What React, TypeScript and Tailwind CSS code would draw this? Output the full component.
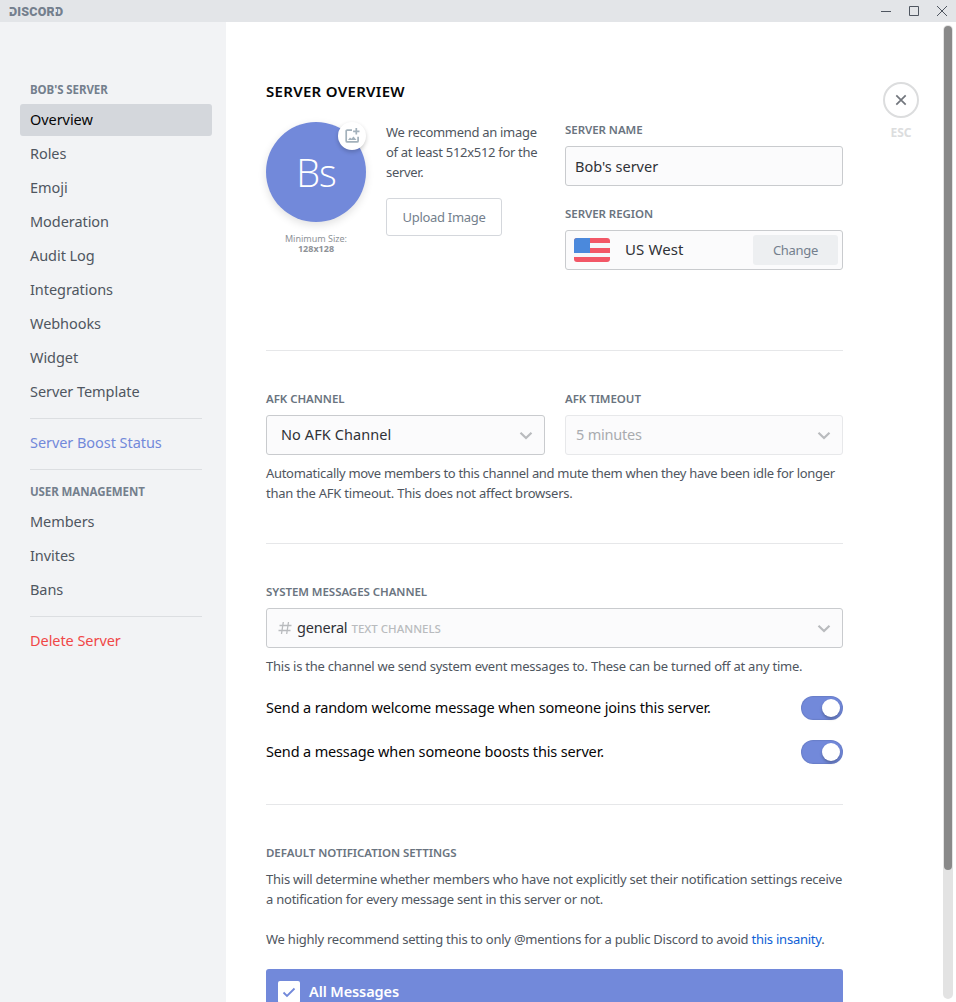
import React from "react";

type Tone = "default" | "active" | "brand" | "danger";

const TONES: Record<Tone, string> = {
  default: "text-[#4f5660]",
  active: "bg-[#d4d7dc] text-[#060607]",
  brand: "text-[#7289da]",
  danger: "text-[#f04747]",
};

function NavItem({ label, tone = "default" }: { label: string; tone?: Tone }) {
  return (
    <div className={`mb-0.5 h-8 shrink-0 rounded-[3px] px-2.5 text-[14.5px] leading-[30px] tracking-[-0.06px] ${TONES[tone]}`}>
      {label}
    </div>
  );
}

function NavHeader({ children }: { children: React.ReactNode }) {
  return (
    <div className="mb-1.5 px-2.5 text-[11.5px] leading-4 font-bold tracking-[-0.08px] text-[#747f8d] uppercase">{children}</div>
  );
}

function NavDivider() {
  return (
    <div className="px-2.5 py-2">
      <div className="h-px bg-[#dcdee1]" />
    </div>
  );
}

function Label({ children }: { children: React.ReactNode }) {
  return (
    <div className="mb-2 text-[11.5px] leading-4 font-semibold tracking-[-0.05px] text-[#6a7480] uppercase">{children}</div>
  );
}

function Chevron() {
  return (
    <svg width="14" height="14" viewBox="0 0 14 14" fill="none" stroke="#b9bbbe" strokeWidth="2.2">
      <path d="M1.5 4.7 7 10l5.5-5.300" />
    </svg>
  );
}

function Description({ children }: { children: React.ReactNode }) {
  return <p className="text-[13px] leading-5 tracking-[-0.235px] whitespace-nowrap text-[#4f5660]">{children}</p>;
}

function Toggle({ label }: { label: string }) {
  return (
    <div className="flex h-6 items-center justify-between">
      <span className="text-[14.5px] tracking-[-0.15px] text-[#060607]">{label}</span>
      <span className="flex h-6 w-[42px] justify-end rounded-full bg-[#7289da] p-[3px] shadow-[inset_0_0_1px_1px_rgba(0,0,0,0.08)]">
        <span className="h-[18px] w-[18px] rounded-full bg-white shadow-[0_2px_3px_rgba(0,0,0,0.25)]" />
      </span>
    </div>
  );
}

function Flag() {
  return (
    <svg width="36" height="24" viewBox="0 0 36 24">
      <defs>
        <clipPath id="flag">
          <rect width="36" height="24" rx="3" />
        </clipPath>
      </defs>
      <g clipPath="url(#flag)">
        <rect width="36" height="24" fill="#f5f7fa" />
        <path fill="#f25767" d="M0 0h36v5H0zM0 10h36v5H0zM0 19h36v5H0z" />
        <rect width="16" height="15" fill="#4b89dc" />
      </g>
    </svg>
  );
}

export default function App() {
  return (
    <div className="flex h-[1002px] w-[956px] flex-col overflow-hidden bg-white font-['Noto_Sans',sans-serif]">
      <header className="flex h-[22px] shrink-0 items-center justify-between bg-[#e3e5e8] pl-[9px]">
        <span className="relative pt-0.5 font-['Roboto',sans-serif] text-[12.5px] leading-[22px] font-black tracking-[0.22px] text-[#747f8d]">
          DISCORD
          <span className="absolute top-[10px] left-0 h-[3px] w-[3px] bg-[#e3e5e8]" />
          <span className="absolute top-[10px] right-[6px] h-[3px] w-[3px] bg-[#e3e5e8]" />
        </span>
        <div className="flex">
          <span className="flex h-[22px] w-7 items-center justify-center">
            <svg width="12" height="12" viewBox="0 0 12 12" stroke="#4f5660"><path d="M1 6.5h10" /></svg>
          </span>
          <span className="flex h-[22px] w-7 items-center justify-center">
            <svg width="12" height="12" viewBox="0 0 12 12" stroke="#4f5660" fill="none"><path d="M1.5 1.5h9v9h-9z" /></svg>
          </span>
          <span className="flex h-[22px] w-7 items-center justify-center">
            <svg width="12" height="12" viewBox="0 0 12 12" stroke="#4f5660"><path d="m1 1 10 10M11 1 1 11" /></svg>
          </span>
        </div>
      </header>

      <div className="flex min-h-0 flex-1">
        <nav className="flex w-[226px] shrink-0 flex-col bg-[#f2f3f5] pt-[60px] pr-3.5 pl-5">
          <NavHeader>Bob's server</NavHeader>
          <NavItem label="Overview" tone="active" />
          <NavItem label="Roles" />
          <NavItem label="Emoji" />
          <NavItem label="Moderation" />
          <NavItem label="Audit Log" />
          <NavItem label="Integrations" />
          <NavItem label="Webhooks" />
          <NavItem label="Widget" />
          <NavItem label="Server Template" />
          <NavDivider />
          <NavItem label="Server Boost Status" tone="brand" />
          <NavDivider />
          <div className="pt-1.5">
            <NavHeader>User management</NavHeader>
          </div>
          <NavItem label="Members" />
          <NavItem label="Invites" />
          <NavItem label="Bans" />
          <NavDivider />
          <NavItem label="Delete Server" tone="danger" />
        </nav>

        <main className="ml-10 w-[577px] shrink-0 pt-[59px]">
          <h2 className="text-[15px] leading-5 font-semibold tracking-[0.3px] text-[#060607]">SERVER OVERVIEW</h2>

          <section className="mt-[21px] flex h-[229px] border-b border-[#e6e7e9]">
            <div className="w-[100px] shrink-0">
              <div className="relative flex h-[100px] items-center justify-center rounded-full bg-[#7289da] font-['Open_Sans',sans-serif] text-[38px] font-light tracking-[-1px] text-white shadow-[0_3px_8px_rgba(0,0,0,0.12)]">
                Bs
                <span className="absolute top-0 right-0 flex h-7 w-7 items-center justify-center rounded-full bg-white shadow-[0_2px_4px_rgba(0,0,0,0.2)]">
                  <svg width="16" height="16" viewBox="0 0 16 16" fill="none" stroke="#a3b1bb" strokeWidth="1.700">
                    <path d="M8 2.100H3.200a1 1 0 0 0-1 1v9.800a1 1 0 0 0 1 1h9.900a1 1 0 0 0 1-1V8.700M12.300.1v6.400M9.100 3.300h6.400" />
                    <path d="m4 12 2-2.600 1.400 1.400 2.100-2.300 3 3.500z" fill="#a3b1bb" stroke="none" />
                  </svg>
                </span>
              </div>
              <div className="mt-3 text-center text-[9px] leading-[10px] text-[#8e9297]">
                <div>Minimum Size:</div>
                <div className="font-bold">128x128</div>
              </div>
            </div>
            <div className="ml-5 w-[170px] shrink-0">
              <p className="text-[13px] leading-5 tracking-[-0.3px] text-[#4f5660]">
                We recommend an image
                <br />
                of at least 512x512 for the
                <br />
                server.
              </p>
              <button className="mt-4 flex h-[38px] w-[116px] items-center justify-center rounded-[3px] border border-[#d4d7dc] pt-px text-[13px] tracking-[-0.3px] text-[#747f8d]">
                Upload Image
              </button>
            </div>
            <div className="ml-auto w-[278px]">
              <Label>Server name</Label>
              <div className="flex h-10 items-center rounded-[3px] border border-[#c9cbce] bg-[#fbfbfc] px-[9px] pt-px text-[14.5px] text-[#303237]">
                Bob's server
              </div>
              <div className="mt-5">
                <Label>Server region</Label>
              </div>
              <div className="flex h-10 items-center rounded-[3px] border border-[#c9cbce] bg-[#fbfbfc] pr-1 pl-2">
                <Flag />
                <span className="ml-[15px] pb-0.5 text-[15px] tracking-[0.1px] text-[#303237]">US West</span>
                <button className="ml-auto h-[30px] w-[85px] rounded-[3px] bg-[#edeff1] pt-px text-[13px] tracking-[-0.3px] text-[#747f8d]">
                  Change
                </button>
              </div>
            </div>
          </section>

          <section className="mt-10 h-[153px] border-b border-[#e6e7e9]">
            <div className="flex justify-between">
              <div className="w-[279px]">
                <Label>AFK channel</Label>
                <div className="flex h-10 items-center justify-between rounded-[3px] border border-[#c9cbce] bg-[#fbfbfc] pr-[11px] pl-3.5">
                  <span className="text-[14.500px] tracking-[0.080px] text-[#303237]">No AFK Channel</span>
                  <Chevron />
                </div>
              </div>
              <div className="w-[278px]">
                <Label>AFK timeout</Label>
                <div className="flex h-10 items-center justify-between rounded-[3px] border border-[#e7e8ea] bg-[#fbfbfc] pr-[11px] pl-2.5">
                  <span className="text-[14.500px] tracking-[-0.200px] text-[#a9abaf]">5 minutes</span>
                  <Chevron />
                </div>
              </div>
            </div>
            <div className="mt-2">
              <Description>
                <span className="tracking-[-0.305px]">
                  Automatically move members to this channel and mute them when they have been idle for longer
                </span>
                <br />
                than the AFK timeout. This does not affect browsers.
              </Description>
            </div>
          </section>

          <section className="mt-10 h-[221px] border-b border-[#e6e7e9]">
            <Label>System messages channel</Label>
            <div className="mb-2 flex h-10 items-center rounded-[3px] border border-[#c9cbce] bg-[#fbfbfc] px-[11px]">
              <svg width="14" height="14" viewBox="0 0 14 14" fill="none" stroke="#b9bbbe" strokeWidth="1.300">
                <path d="M5.300 1 3.500 13M10.500 1 8.700 13M1.500 4.500h12M.500 9.500h12" />
              </svg>
              <span className="ml-[5px] text-[14.500px] tracking-[-0.200px] text-[#303237]">general</span>
              <span className="ml-1 pt-px text-[11.500px] font-medium text-[#b9bbbe]">TEXT CHANNELS</span>
              <span className="ml-auto">
                <Chevron />
              </span>
            </div>
            <Description>This is the channel we send system event messages to. These can be turned off at any time.</Description>
            <div className="mt-5 flex flex-col gap-5">
              <Toggle label="Send a random welcome message when someone joins this server." />
              <Toggle label="Send a message when someone boosts this server." />
            </div>
          </section>

          <section className="mt-10">
            <Label>Default notification settings</Label>
            <Description>
              This will determine whether members who have not explicitly set their notification settings receive
              <br />
              a notification for every message sent in this server or not.
              <br />
              <br />
              We highly recommend setting this to only @mentions for a public Discord to avoid{" "}
              <a className="text-[#0f5fd6]">this insanity</a>.
            </Description>
            <div className="mt-5 flex h-[46px] items-center rounded-[3px] bg-[#7289da] pl-3">
              <span className="flex h-[22px] w-[22px] items-center justify-center rounded-[2px] bg-white">
                <svg width="14" height="14" viewBox="0 0 14 14" fill="none" stroke="#7289da" strokeWidth="1.800">
                  <path d="m1.500 7.500 3.500 3.500 7.500-7.500" />
                </svg>
              </span>
              <span className="ml-[9px] text-[14.500px] font-semibold tracking-[-0.100px] text-white">All Messages</span>
            </div>
          </section>
        </main>

        <aside className="ml-10 w-9 shrink-0 pt-[60px]">
          <button className="flex h-9 w-9 items-center justify-center rounded-full border-2 border-[#dcddde]">
            <svg width="12" height="12" viewBox="0 0 12 12" stroke="#72767d" strokeWidth="1.700">
              <path d="m1.300 1.300 9.400 9.400M10.700 1.300 1.300 10.700" />
            </svg>
          </button>
          <div className="mt-[7px] text-center text-[12px] leading-4 font-bold text-[#dcddde]">ESC</div>
        </aside>

        <div className="mt-[3px] mr-[3px] mb-[3px] ml-auto w-2.5 rounded-full bg-[#e3e3e3] px-px pt-px">
          <div className="h-[844px] rounded-full bg-[#898989]" />
        </div>
      </div>
    </div>
  );
}
